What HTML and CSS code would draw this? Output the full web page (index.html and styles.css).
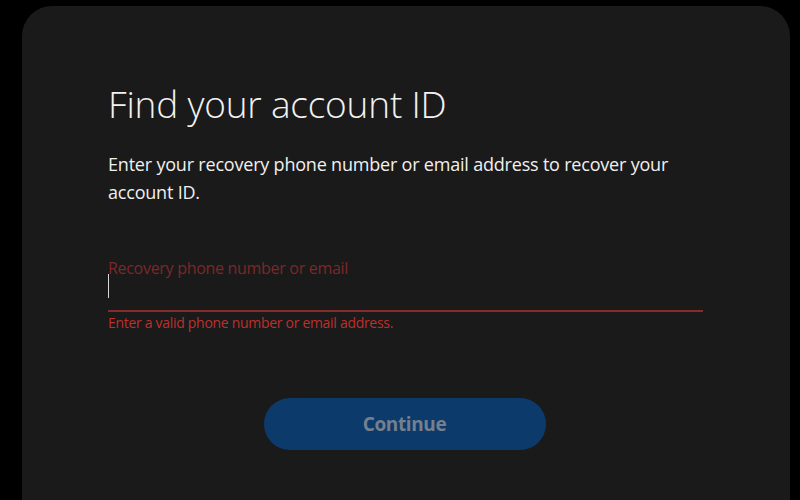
FILE: index.html
```html
<!DOCTYPE html>
<html lang="en">
<head>
<meta charset="utf-8">
<title>Find your account ID</title>
<link rel="stylesheet" href="styles.css">
</head>
<body>
<main class="card">
  <h1 class="title">Find your account ID</h1>
  <p class="desc">Enter your recovery phone number or email address to recover your account ID.</p>
  <div class="field">
    <label class="label" for="rec">Recovery phone number or email</label>
    <div class="input-wrap"><span class="caret"></span></div>
    <div class="line"></div>
    <div class="error">Enter a valid phone number or email address.</div>
  </div>
  <div class="actions">
    <button class="btn" type="button">Continue</button>
  </div>
</main>
</body>
</html>
```
FILE: styles.css
```css
html, body {
  margin: 0;
  padding: 0;
  background: #000;
  height: 100%;
  overflow: hidden;
}
body {
  font-family: "Open Sans", "DejaVu Sans", sans-serif;
}
.card {
  margin: 6px 10px 0 22px;
  height: 494px;
  background: #1a1a1a;
  border-radius: 30px 30px 0 0;
  padding: 76px 87px 0 86px;
  box-sizing: border-box;
}
.title {
  margin: 0;
  font-weight: 300;
  font-size: 37px;
  line-height: 44px;
  color: #f2f2f2;
  letter-spacing: -0.2px;
}
.desc {
  margin: 24px 0 0;
  font-size: 18px;
  line-height: 28px;
  color: #f0f0f0;
  letter-spacing: -0.2px;
}
.field {
  margin-top: 53px;
}
.label {
  display: block;
  font-size: 16px;
  line-height: 18px;
  color: #7c2828;
  letter-spacing: -0.3px;
}
.input-wrap {
  margin-top: -3px;
  height: 24px;
  display: flex;
  align-items: center;
}
.caret {
  width: 1px;
  height: 24px;
  background: #d8d8d8;
}
.line {
  margin-top: 12px;
  height: 2px;
  background: #862b2b;
}
.error {
  margin-top: 2px;
  font-size: 14px;
  line-height: 18px;
  color: #be302d;
  letter-spacing: -0.3px;
}
.actions {
  display: flex;
  justify-content: center;
  margin-top: 66px;
  padding-right: 2px;
}
.btn {
  width: 282px;
  height: 52px;
  border: none;
  border-radius: 26px;
  background: #0c3b6b;
  color: #74808d;
  font-family: inherit;
  font-size: 19px;
  font-weight: 700;
  letter-spacing: -0.4px;
}
```
